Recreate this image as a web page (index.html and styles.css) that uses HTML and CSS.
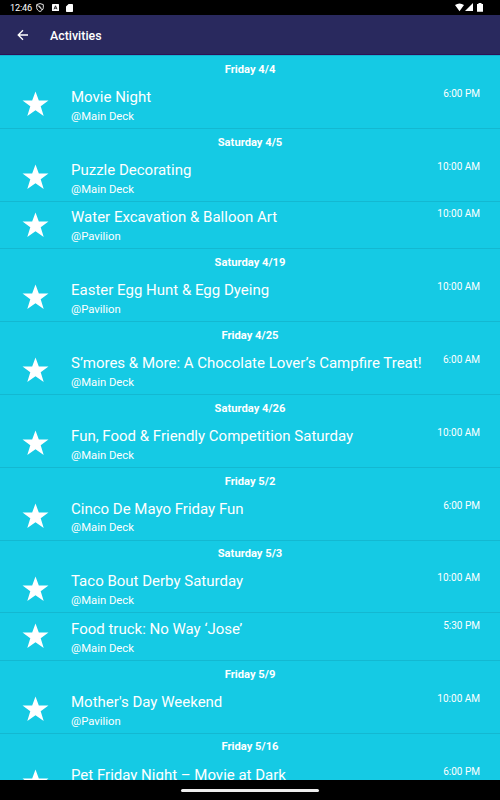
FILE: index.html
```html
<!DOCTYPE html>
<html lang="en">
<head>
<meta charset="utf-8">
<title>Activities</title>
<link rel="stylesheet" href="styles.css">
</head>
<body>
<svg class="defs" width="0" height="0"><symbol id="star" viewBox="0 0 26 26"><path d="M13 .5l3.200 8.700h9.300l-7.500 5.600 2.900 9.200-7.900-5.500-7.900 5.500 2.900-9.200-7.500-5.600h9.300z"/></symbol></svg>
<div class="status">
  <span class="clock">12:46</span>
  <svg class="shield" width="8" height="9" viewBox="0 0 8 9"><path d="M4 .6L7.300 1.600V4.500C7.300 6.400 5.800 7.900 4 8.500 2.200 7.900.7 6.400.7 4.500V1.600ZM1.200 1.800L6.300 7M3 2.800l2.500 2.400" fill="none" stroke="#fff" stroke-width=".9"/></svg>
  <svg class="abox" width="7" height="7" viewBox="0 0 7 7"><rect width="7" height="7" rx=".6" fill="#fff"/><path d="M2 5.300L3.500 1.800 5 5.300M2.500 4.200h2" fill="none" stroke="#000" stroke-width=".8"/></svg>
  <svg class="sd" width="7" height="8" viewBox="0 0 7 8"><path d="M2.600 0H6.300Q7 0 7 .7V7.300Q7 8 6.300 8H.7Q0 8 0 7.300V2.600Z" fill="#fff"/></svg>
  <span class="grow"></span>
  <svg width="29" height="9" viewBox="0 0 29 9" fill="#fff"><path d="M0 2Q4.500-1.200 9 2L4.500 8.200ZM18 0V8H10ZM23.500 0h3v.9h1.500V8.800h-6V.9h1.500z"/></svg>
</div>
<header class="bar">
  <svg width="12" height="12" viewBox="0 0 12 12"><path d="M11 6H1.500M6 1.200L1.200 6 6 10.800" fill="none" stroke="#fff" stroke-width="1.300"/></svg>
  <h1>Activities</h1>
</header>
<main class="list" id="list"></main>
<footer class="nav"><span></span></footer>
<script src="app.js"></script>
</body>
</html>
```
FILE: styles.css
```css
* { box-sizing: border-box; }
body {
  margin: 0;
  width: 500px;
  height: 800px;
  display: flex;
  flex-direction: column;
  overflow: hidden;
  background: #000;
  color: #fff;
  font-family: Roboto, "Liberation Sans", sans-serif;
}
.defs { position: absolute; }
.status {
  height: 15px;
  flex: none;
  display: flex;
  align-items: center;
  padding: 0 16px 0 10px;
}
.clock { font-size: 9.2px; line-height: 15px; width: 22px; letter-spacing: -0.15px; }
.shield { margin-left: 4px; }
.abox { margin-left: 8px; }
.sd { margin-left: 7px; }
.grow { flex: 1; }
.status svg:last-child { margin-right: 0; }
.bar {
  height: 40px;
  flex: none;
  display: flex;
  align-items: center;
  gap: 21px;
  padding-left: 17px;
  background: #29295e;
  border-bottom: 1px solid #2c1155;
}
h1 { margin: 2px 0 0; font-size: 12.4px; font-weight: 500; line-height: 20px; }
.list {
  height: 725px;
  flex: none;
  overflow: hidden;
  padding-top: 0.2px;
  background: #15cae4;
  border-top: 1px solid #12b4cf;
}
.day {
  margin: 0;
  height: 25.4px;
  padding-top: 5.8px;
  text-align: center;
  font-size: 11.2px;
  font-weight: 700;
  line-height: 16px;
}
.item {
  height: 47.45px;
  display: flex;
  align-items: flex-start;
  padding: 5.5px 20px 0 22px;
  border-bottom: 1px solid #13b8d1;
}
.star { width: 27px; height: 27px; margin-top: 4.2px; fill: #fff; flex: none; }
.text { flex: 1; margin-left: 22px; white-space: nowrap; }
.title { font-size: 15px; line-height: 20px; }
.place { font-size: 11.3px; line-height: 16px; margin-top: 1.8px; }
.time { font-size: 10px; line-height: 14px; }
.nav {
  height: 20px;
  flex: none;
  display: flex;
  align-items: center;
  justify-content: center;
}
.nav span { width: 138px; height: 3px; border-radius: 2px; background: #eee; }
```
FILE: app.js
```js
const days = [
  ["Friday 4/4", [["Movie Night", "@Main Deck", "6:00 PM"]]],
  ["Saturday 4/5", [["Puzzle Decorating", "@Main Deck", "10:00 AM"], ["Water Excavation & Balloon Art", "@Pavilion", "10:00 AM"]]],
  ["Saturday 4/19", [["Easter Egg Hunt & Egg Dyeing", "@Pavilion", "10:00 AM"]]],
  ["Friday 4/25", [["S’mores & More: A Chocolate Lover’s Campfire Treat!", "@Main Deck", "6:00 AM"]]],
  ["Saturday 4/26", [["Fun, Food & Friendly Competition Saturday", "@Main Deck", "10:00 AM"]]],
  ["Friday 5/2", [["Cinco De Mayo Friday Fun", "@Main Deck", "6:00 PM"]]],
  ["Saturday 5/3", [["Taco Bout Derby Saturday", "@Main Deck", "10:00 AM"], ["Food truck: No Way ‘Jose’", "@Main Deck", "5:30 PM"]]],
  ["Friday 5/9", [["Mother's Day Weekend", "@Pavilion", "10:00 AM"]]],
  ["Friday 5/16", [["Pet Friday Night – Movie at Dark", "", "6:00 PM"]]]
];
const el = (tag, cls, text) => {
  const node = document.createElement(tag);
  node.className = cls;
  if (text) node.textContent = text;
  return node;
};
const list = document.getElementById("list");
for (const [day, items] of days) {
  list.append(el("h2", "day", day));
  for (const [title, place, time] of items) {
    const row = el("div", "item");
    row.innerHTML = '<svg class="star"><use href="#star"/></svg>';
    const text = el("div", "text");
    text.append(el("div", "title", title), el("div", "place", place));
    row.append(text, el("div", "time", time));
    list.append(row);
  }
}
```
